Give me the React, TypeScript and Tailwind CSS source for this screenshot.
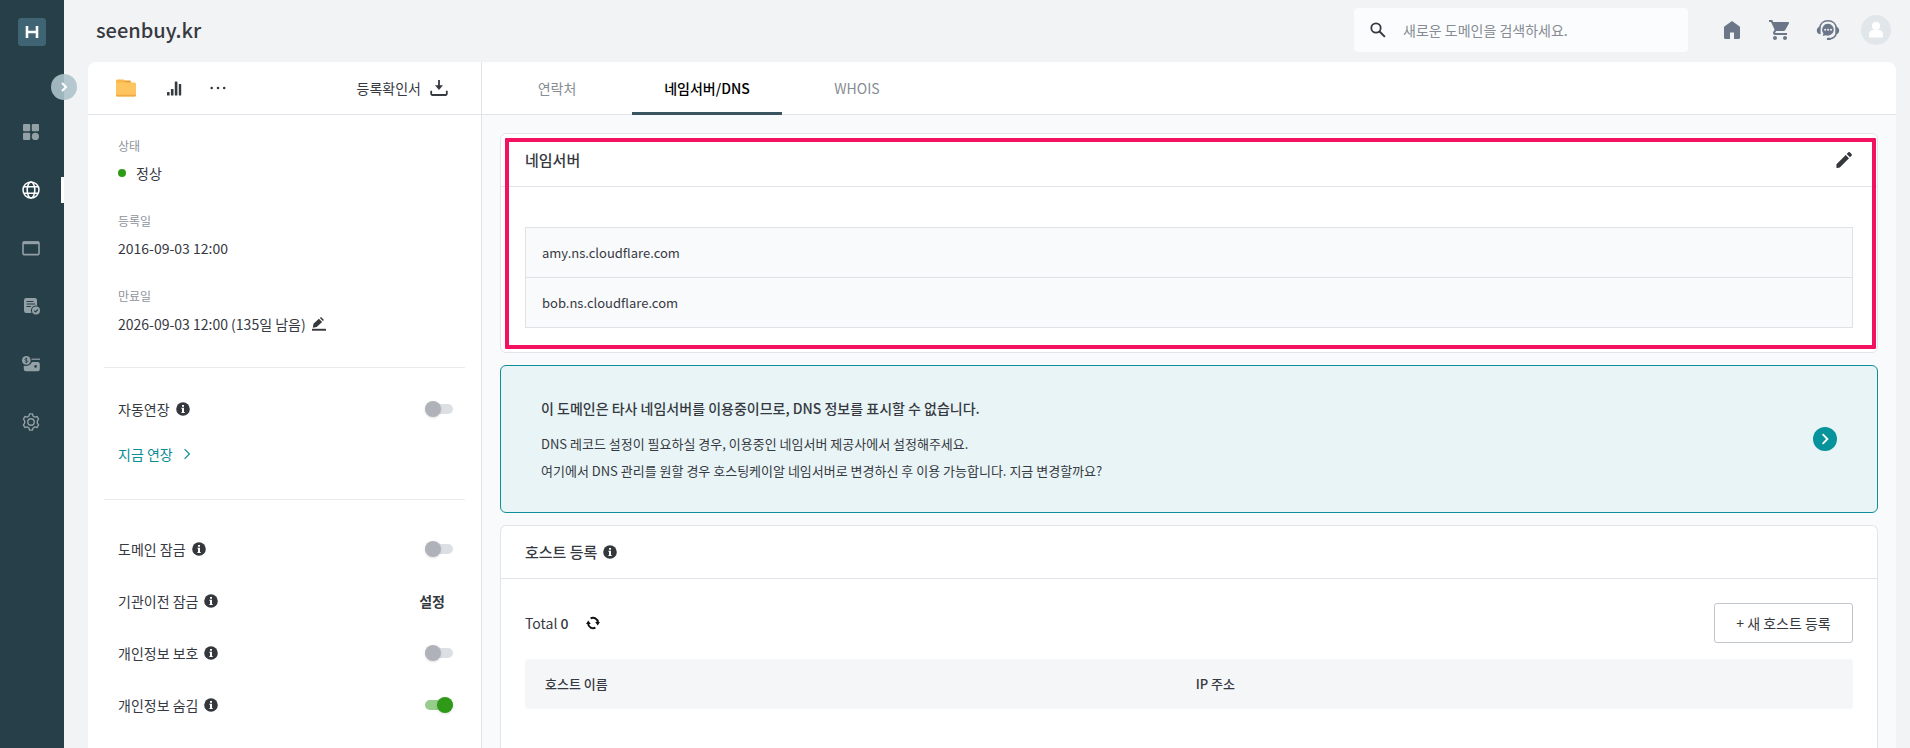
import React, { useState } from "react";
import { MdShoppingCart } from "react-icons/md";

type IconProps = { className?: string };

const GridIcon = () => (
  <svg viewBox="0 0 16 16" className="size-4" fill="currentColor">
    <rect x="0" y="0" width="7.2" height="7.2" rx="1" />
    <rect x="8.8" y="0" width="7.2" height="7.2" rx="1" />
    <rect x="0" y="8.8" width="7.2" height="7.2" rx="1" />
    <circle cx="12.4" cy="12.4" r="3.6" />
  </svg>
);

const GlobeIcon = () => (
  <svg viewBox="0 0 18 18" className="size-[18px]" fill="none" stroke="currentColor" strokeWidth="1.5">
    <circle cx="9" cy="9" r="8" />
    <ellipse cx="9" cy="9" rx="3.8" ry="8" />
    <path d="M2 5.7h14M2 12.3h14" />
  </svg>
);

const WindowIcon = () => (
  <svg viewBox="0 0 18 18" className="size-[18px]" fill="none" stroke="currentColor">
    <rect x="1" y="3" width="16" height="12.6" rx="1" strokeWidth="1.6" />
    <path d="M1 3.8h16" strokeWidth="2.8" />
  </svg>
);

const OrderIcon = () => (
  <svg viewBox="0 0 18 18" className="size-[18px]" fill="none">
    <path
      d="M4.2 1h8.6A2.2 2.2 0 0 1 15 3.2v5.6a5 5 0 0 0-5.6 7.2H4.2A2.2 2.2 0 0 1 2 13.8V3.2A2.2 2.2 0 0 1 4.2 1z"
      fill="currentColor"
    />
    <path d="M4.5 4.5h7M4.5 7h8.5M4.5 9.5h4.5" stroke="#273f48" strokeWidth="1" />
    <circle cx="14" cy="13.6" r="4" fill="currentColor" />
    <path d="M12.2 13.7l1.3 1.3 2.4-2.5" stroke="#273f48" strokeWidth="1.2" />
  </svg>
);

const WalletIcon = () => (
  <svg viewBox="0 0 18 18" className="size-[18px]" fill="none">
    <path d="M9.5 4.2H18" stroke="currentColor" strokeWidth="1.2" />
    <path
      d="M10 7h5.8A2 2 0 0 1 17.8 9v5.2a2 2 0 0 1-2 2H4a2.2 2.2 0 0 1-2.2-2.2v-3.2C5 11.5 8.5 10.5 10 7z"
      fill="currentColor"
    />
    <circle cx="13.6" cy="11.4" r="1.3" fill="#273f48" />
    <circle cx="4.3" cy="5.4" r="4.3" fill="currentColor" />
    <path
      d="M5.7 4.2c-.3-.6-.8-.8-1.4-.8-.8 0-1.4.4-1.4 1s.5.9 1.4 1c.9.2 1.5.4 1.5 1.1 0 .6-.6 1-1.5 1-.7 0-1.2-.3-1.5-.9M4.3 2.6v5.6"
      stroke="#273f48"
      strokeWidth=".8"
    />
  </svg>
);

const GearIcon = () => (
  <svg viewBox="0 0 18 18" className="size-[18px]" fill="none" stroke="currentColor" strokeWidth="1.4">
    <path
      strokeLinejoin="round"
      d="M7.5 .9h3l.5 2.1 1.9 1.1 2.2-.6 1.5 2.6-1.3 1.8v2.2l1.3 1.8-1.5 2.6-2.2-.6-1.9 1.1-.5 2.1h-3L7 15l-1.9-1.1-2.2.6-1.5-2.6 1.3-1.8V7.9L1.4 6.1l1.5-2.6 2.2.6L7 3z"
    />
    <circle cx="9" cy="9" r="3.2" />
  </svg>
);

const ChevronRight = ({ className }: IconProps) => (
  <svg viewBox="0 0 10 10" className={className} fill="none" stroke="currentColor">
    <path d="M3 1l4 4-4 4" />
  </svg>
);

const FolderIcon = () => (
  <svg viewBox="0 0 20 18" className="h-[18px] w-5">
    <path d="M0 2a1.5 1.5 0 0 1 1.5-1.5h6L9 2h5l1 1.5v4H0z" fill="#f9b64a" />
    <path d="M8 1.5h6.5l.8 2H9.5z" fill="#e8a02f" />
    <path d="M0 3.5h18.5A1.5 1.5 0 0 1 20 5v11a1.5 1.5 0 0 1-1.5 1.5h-17A1.5 1.5 0 0 1 0 16z" fill="#fec45f" />
    <path d="M0 15.8h20v.5a1.2 1.2 0 0 1-1.2 1.2H1.2A1.2 1.2 0 0 1 0 16.3z" fill="#f0ac43" />
  </svg>
);

const StatsIcon = () => (
  <svg viewBox="0 0 15 15" className="size-[15px]" fill="#36393f">
    <rect x="0" y="11" width="2.6" height="3.5" rx=".6" />
    <rect x="3.9" y="8" width="2.6" height="6.5" rx=".6" />
    <rect x="7.8" y=".5" width="2.6" height="14" rx=".6" />
    <rect x="11.8" y="3" width="2.4" height="11.5" rx=".6" />
  </svg>
);

const MoreIcon = () => (
  <svg viewBox="0 0 16 4" className="h-1 w-4" fill="#36393f">
    <circle cx="1.7" cy="2" r="1.3" />
    <circle cx="8" cy="2" r="1.3" />
    <circle cx="14.2" cy="2" r="1.3" />
  </svg>
);

const DownloadIcon = () => (
  <svg viewBox="0 0 18 16" className="h-4 w-[18px]" fill="none" stroke="#36393f">
    <path d="M9 0v7" strokeWidth="1.8" />
    <path d="M5 5.2h8L9 9.9z" fill="#36393f" stroke="none" />
    <path d="M1.2 10.8v3a1.2 1.2 0 0 0 1.2 1.2h13.2a1.2 1.2 0 0 0 1.2-1.2v-3" strokeWidth="1.8" />
  </svg>
);

const SearchIcon = () => (
  <svg viewBox="0 0 16 16" className="size-4" fill="none" stroke="#36393f">
    <circle cx="6" cy="6" r="4.7" strokeWidth="1.8" />
    <path d="M9.3 9.3l5.6 5.6" strokeWidth="2" />
  </svg>
);

const HomeIcon = () => (
  <svg viewBox="0 0 16 18" className="h-[18px] w-4" fill="currentColor">
    <path d="M8 0l7.3 5.2c.5.3.7.7.7 1.3v10a1.5 1.5 0 0 1-1.500 1.500H10v-6.500H6V18H1.500A1.500 1.500 0 0 1 0 16.500v-10c0-.6.2-1 .7-1.300z" />
  </svg>
);

const SupportIcon = () => (
  <svg viewBox="0 0 24 22" className="h-[22px] w-6" fill="none">
    <path d="M3.5 9.5C4 4.8 7.5 1.8 12 1.8s8 3 8.5 7.7v4.5c-.8 3-3.500 5.400-7 6" stroke="currentColor" strokeWidth="1.5" />
    <path d="M4.6 7.5v7.8C2.2 15 .8 13.5 .8 11.400S2.200 7.800 4.600 7.500zM19.400 7.500v7.800c2.400-.3 3.800-1.800 3.800-3.900s-1.400-3.600-3.800-3.900z" fill="currentColor" />
    <path d="M12 4.8a5.9 5.9 0 1 1-2.200 11.400L6.800 17l.6-2.700A5.900 5.900 0 0 1 12 4.800z" fill="currentColor" />
    <circle cx="9.2" cy="10.7" r="1" fill="#f2f3f5" />
    <circle cx="12.1" cy="10.7" r="1" fill="#f2f3f5" />
    <circle cx="15" cy="10.7" r="1" fill="#f2f3f5" />
    <rect x="10.8" y="18.7" width="4" height="2.4" rx="1.2" fill="currentColor" />
  </svg>
);

const AvatarIcon = () => (
  <svg viewBox="0 0 30 30" className="size-[30px]">
    <circle cx="15" cy="15" r="15" fill="#e1e6ea" />
    <circle cx="15" cy="11" r="4.2" fill="#fff" />
    <path d="M8 22.5v-3c0-3 2.2-4.5 4.6-4.5h4.8c2.4 0 4.6 1.5 4.6 4.5v3z" fill="#fff" />
  </svg>
);

const InfoIcon = () => (
  <svg viewBox="0 0 14 14" className="size-[14px] shrink-0">
    <circle cx="7" cy="7" r="6.8" fill="#34373c" />
    <path d="M6 3h2v1.7H6zM5.4 5.8H8v4.3h.7v1H5.4v-1H6V6.8h-.6z" fill="#fff" />
  </svg>
);

const EditLineIcon = () => (
  <svg viewBox="0 0 14 14" className="size-[14px]" fill="#34373c">
    <path d="M.8 10.8l.7-4L6.9 1.7l3.2 3.2-5.4 5.2zM7.9 1L9 0l3 3-1.1 1.1z" />
    <rect x="0" y="11.8" width="14" height="1.9" />
  </svg>
);

const PencilIcon = () => (
  <svg viewBox="0 0 18 18" className="size-[18px]" fill="#34373c">
    <path d="M1.5 13.2l9.2-9.2 3.3 3.3-9.2 9.2-2.6.5a.7.7 0 0 1-.8-.8zM11.700 3l1.700-1.700a1 1 0 0 1 1.400 0l1.900 1.900a1 1 0 0 1 0 1.400L15 6.300z" />
  </svg>
);

const RefreshIcon = () => (
  <svg viewBox="0 0 14 14" className="size-[14px]" fill="none" stroke="#111" strokeWidth="2">
    <path d="M4.6 2.4A5 5 0 0 1 11.9 6.5M9.4 11.6A5 5 0 0 1 2.1 7.5" />
    <path d="M9.2 6H14l-2.3 3.6zM4.8 8H0l2.300-3.600z" fill="#111" stroke="none" />
  </svg>
);

const navItems = [
  { label: "대시보드", icon: <GridIcon />, active: false },
  { label: "도메인", icon: <GlobeIcon />, active: true },
  { label: "호스팅", icon: <WindowIcon />, active: false },
  { label: "신청내역", icon: <OrderIcon />, active: false },
  { label: "결제", icon: <WalletIcon />, active: false },
  { label: "환경설정", icon: <GearIcon />, active: false },
];

function Sidebar() {
  return (
    <aside className="relative flex w-16 shrink-0 flex-col bg-[#273f48] pt-[18px]">
      <a href="#" aria-label="홈" className="ml-[18px] flex size-7 items-center justify-center rounded-[3px] bg-[#3f6474]">
        <svg viewBox="0 0 14 14" className="size-[14px]" fill="none" stroke="#fff" strokeWidth="2.6">
          <path d="M2 1v12M12 1v12M2 7h10" />
        </svg>
      </a>
      <button
        type="button"
        aria-label="메뉴 펼치기"
        className="absolute top-[74px] -right-[13px] flex size-[26px] items-center justify-center rounded-full bg-[#aec3cb]/90 text-white"
      >
        <ChevronRight className="size-[10px] stroke-2" />
      </button>
      <nav className="mt-[57px] flex flex-col">
        {navItems.map((item) => (
          <a
            key={item.label}
            href="#"
            aria-label={item.label}
            className={
              item.active
                ? "flex h-[58px] items-center justify-between pl-[22px] text-white"
                : "flex h-[58px] items-center pl-[22px] text-[#93a0a5]"
            }
          >
            <span className="flex w-[18px] justify-center">{item.icon}</span>
            {item.active && <span className="h-[26px] w-[3px] bg-white" />}
          </a>
        ))}
      </nav>
    </aside>
  );
}

function Header() {
  return (
    <header className="flex h-[62px] shrink-0 items-center justify-between pr-[19px] pb-[3px] pl-8">
      <h1 className="text-xl leading-7 font-medium">seenbuy.kr</h1>
      <div className="flex items-center">
        <div className="mr-[29px] flex h-11 w-[334px] items-center gap-[17px] rounded bg-[#fbfcfd] pl-4">
          <label htmlFor="domain-search" aria-label="도메인 검색"><SearchIcon /></label>
          <input
            id="domain-search"
            type="text"
            aria-label="도메인 검색"
            placeholder="새로운 도메인을 검색하세요."
            className="h-full min-w-0 flex-1 bg-transparent text-sm leading-6 outline-none placeholder:text-[#868c94]"
          />
        </div>
        <div className="flex items-center gap-[18px] text-[#6b7789]">
          <a href="#" aria-label="홈" className="flex w-[30px] justify-center"><HomeIcon /></a>
          <a href="#" aria-label="장바구니" className="flex w-[30px] justify-center"><MdShoppingCart className="size-6" /></a>
          <a href="#" aria-label="고객센터" className="flex w-[30px] justify-center"><SupportIcon /></a>
          <button type="button" aria-label="내 계정"><AvatarIcon /></button>
        </div>
      </div>
    </header>
  );
}

function Toggle({ id, initial = false }: { id: string; initial?: boolean }) {
  const [on, setOn] = useState(initial);
  return (
    <input
      id={id}
      type="checkbox"
      role="switch"
      checked={on}
      onChange={(e) => setOn(e.target.checked)}
      className="relative h-4 w-7 shrink-0 appearance-none before:absolute before:inset-x-0 before:top-[3px] before:h-[10px] before:rounded-full before:bg-[#dce0e5] after:absolute after:top-0 after:left-0 after:size-4 after:rounded-full after:bg-[#afb3b9] after:shadow-sm checked:before:bg-[#97cd8c] checked:after:left-3 checked:after:bg-[#2f9a17]"
    />
  );
}

function SettingRow({ id, label, children }: { id: string; label: string; children: React.ReactNode }) {
  return (
    <div className="flex items-center justify-between pr-3">
      <div className="flex items-center gap-[6px]">
        <label htmlFor={id}>{label}</label>
        <InfoIcon />
      </div>
      {children}
    </div>
  );
}

function DomainInfo() {
  return (
    <section className="flex w-[394px] shrink-0 flex-col border-r border-[#e1e4e8] bg-white text-sm leading-5">
      <div className="flex h-[53px] shrink-0 items-center border-b border-[#e1e4e8] pr-[33px] pl-7">
        <button type="button" aria-label="폴더"><FolderIcon /></button>
        <button type="button" aria-label="통계" className="ml-[31px]"><StatsIcon /></button>
        <button type="button" aria-label="더보기" className="ml-7"><MoreIcon /></button>
        <button type="button" className="ml-auto flex items-center gap-[9px]">
          등록확인서
          <DownloadIcon />
        </button>
      </div>
      <div className="px-4">
        <dl className="border-b border-[#e9ebee] px-[14px] pt-[21px] pb-[33px]">
          <dt className="text-xs leading-5 text-[#8e939b]">상태</dt>
          <dd className="mt-[7px] flex items-center gap-[10px]">
            <span className="size-2 rounded-full bg-[#2f9a17]" />
            정상
          </dd>
          <dt className="mt-7 text-xs leading-5 text-[#8e939b]">등록일</dt>
          <dd className="mt-[7px]">2016-09-03 12:00</dd>
          <dt className="mt-7 text-xs leading-5 text-[#8e939b]">만료일</dt>
          <dd className="mt-2 flex items-center gap-[6px]">
            2026-09-03 12:00 (135일 남음)
            <button type="button" aria-label="만료일 변경"><EditLineIcon /></button>
          </dd>
        </dl>
        <div className="flex flex-col gap-[25px] border-b border-[#e9ebee] pt-[31px] pb-[35px] pl-[14px]">
          <SettingRow id="auto-renew" label="자동연장"><Toggle id="auto-renew" /></SettingRow>
          <a href="#" className="flex items-center gap-2 self-start text-[#0c8c94]">
            지금 연장
            <ChevronRight className="size-3 stroke-1" />
          </a>
        </div>
        <div className="flex flex-col gap-8 pt-[39px] pb-8 pl-[14px]">
          <SettingRow id="domain-lock" label="도메인 잠금"><Toggle id="domain-lock" /></SettingRow>
          <SettingRow id="transfer-lock" label="기관이전 잠금">
            <button type="button" id="transfer-lock" className="mr-2 font-bold">설정</button>
          </SettingRow>
          <SettingRow id="privacy-protect" label="개인정보 보호"><Toggle id="privacy-protect" /></SettingRow>
          <SettingRow id="privacy-hide" label="개인정보 숨김"><Toggle id="privacy-hide" initial /></SettingRow>
        </div>
      </div>
    </section>
  );
}

const tabs = ["연락처", "네임서버/DNS", "WHOIS"];

function Tabs() {
  const [active, setActive] = useState(1);
  return (
    <div role="tablist" className="flex h-[53px] shrink-0 rounded-tr-lg border-b border-[#e1e4e8] bg-white text-sm">
      {tabs.map((tab, i) => (
        <button
          key={tab}
          type="button"
          role="tab"
          aria-selected={i === active}
          onClick={() => setActive(i)}
          className={
            i === active
              ? "-mb-px w-[150px] border-b-[3px] border-[#3b5560] pt-[2px] font-medium text-black"
              : "w-[150px] text-[#868c94]"
          }
        >
          {tab}
        </button>
      ))}
    </div>
  );
}

export default function App() {
  return (
    <div className="flex min-h-screen bg-[#f2f3f5] font-['Noto_Sans_CJK_KR','Noto_Sans',sans-serif] text-[#36393f]">
      <Sidebar />
      <div className="flex min-w-0 flex-1 flex-col">
        <Header />
        <div className="mr-[14px] ml-6 flex flex-1 overflow-hidden rounded-t-lg bg-[#f9fafc]">
          <DomainInfo />
          <main className="flex min-w-0 flex-1 flex-col">
            <Tabs />
            <div className="flex flex-1 flex-col gap-3 px-[18px] pt-[18px]">
              <section className="relative rounded-md border border-[#e1e4e8] bg-white">
                <div className="flex h-[53px] items-center justify-between border-b border-[#e1e4e8] px-6">
                  <h2 className="text-[15px] leading-5 font-medium">네임서버</h2>
                  <button type="button" aria-label="네임서버 수정"><PencilIcon /></button>
                </div>
                <div className="px-6 pt-10 pb-6">
                  <ul className="border-x border-t border-[#dfe3e7] bg-[#f9fafc] text-[13px]">
                    <li className="flex h-[50px] items-center border-b border-[#dfe3e7] px-4">amy.ns.cloudflare.com</li>
                    <li className="flex h-[50px] items-center border-b border-[#dfe3e7] px-4">bob.ns.cloudflare.com</li>
                  </ul>
                </div>
                <div className="pointer-events-none absolute top-1 right-px bottom-[3px] left-1 rounded-[1px] border-4 border-[#f3125f]" />
              </section>

              <section className="flex items-center justify-between rounded-md border border-[#0f8f97] bg-[#e8f4f6] px-10">
                <div className="pt-[30px] pb-7">
                  <p className="text-sm leading-6 font-medium">이 도메인은 타사 네임서버를 이용중이므로, DNS 정보를 표시할 수 없습니다.</p>
                  <p className="mt-[10px] text-[13px] leading-[27px]">DNS 레코드 설정이 필요하실 경우, 이용중인 네임서버 제공사에서 설정해주세요.</p>
                  <p className="text-[13px] leading-[27px]">여기에서 DNS 관리를 원할 경우 호스팅케이알 네임서버로 변경하신 후 이용 가능합니다. 지금 변경할까요?</p>
                </div>
                <button type="button" aria-label="네임서버 변경" className="flex size-6 items-center justify-center rounded-full bg-[#06939b] text-white">
                  <ChevronRight className="size-3 stroke-[1.5]" />
                </button>
              </section>

              <section className="flex-1 rounded-t-md border border-b-0 border-[#e1e4e8] bg-white">
                <div className="flex h-[53px] items-center gap-[6px] border-b border-[#e1e4e8] px-6">
                  <h2 className="text-[15px] leading-5 font-medium">호스트 등록</h2>
                  <InfoIcon />
                </div>
                <div className="px-6 pt-6">
                  <div className="flex items-center justify-between">
                    <div className="flex items-center gap-[17px] text-sm">
                      <span>Total <span className="font-medium">0</span></span>
                      <button type="button" aria-label="새로고침"><RefreshIcon /></button>
                    </div>
                    <button type="button" className="h-10 w-[139px] rounded-[3px] border border-[#c0c5cb] bg-white text-sm">
                      + 새 호스트 등록
                    </button>
                  </div>
                  <table className="mt-4 w-full table-fixed text-left text-[13px]">
                    <thead>
                      <tr className="h-[50px] bg-[#f5f6f8]">
                        <th scope="col" className="w-[49%] rounded-l px-5 font-medium">호스트 이름</th>
                        <th scope="col" className="rounded-r px-5 font-medium">IP 주소</th>
                      </tr>
                    </thead>
                  </table>
                </div>
              </section>
            </div>
          </main>
        </div>
      </div>
    </div>
  );
}
